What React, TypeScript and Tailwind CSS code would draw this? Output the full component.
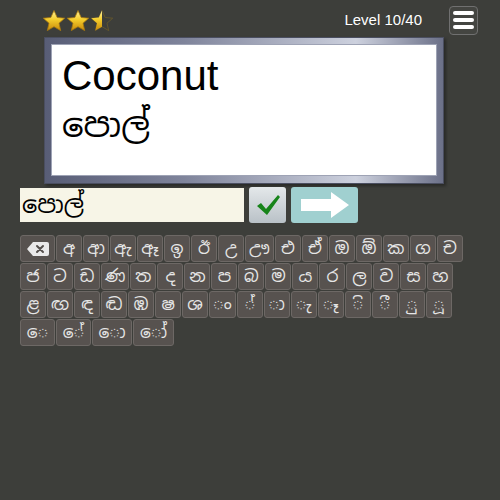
import { useState } from "react";

const row1 = ["අ", "ආ", "ඇ", "ඈ", "ඉ", "ඊ", "උ", "ඌ", "එ", "ඒ", "ඔ", "ඕ", "ක", "ග", "ච"];
const row2 = ["ජ", "ට", "ඩ", "ණ", "ත", "ද", "න", "ප", "බ", "ම", "ය", "ර", "ල", "ව", "ස", "හ"];
const row3 = [
  "ළ", "ඟ", "ඳ", "ඬ", "ඹ", "ෂ", "ශ",
  "\u25CCං", "\u25CC්", "\u25CCා", "\u25CCැ", "\u25CCෑ", "\u25CCි", "\u25CCී", "\u25CCු", "\u25CCූ",
];
const row4 = [
  { k: "\u25CCෙ", w: "min-w-[35px]" },
  { k: "\u25CCේ", w: "min-w-[35px]" },
  { k: "\u25CCො", w: "min-w-[40px]" },
  { k: "\u25CCෝ", w: "min-w-[41px]" },
];

const sinhala = "font-['Noto_Sans_Sinhala','Noto_Sans',sans-serif]";

const Star = ({ half }: { half?: boolean }) => (
  <svg width="24" height="24" viewBox="0 0 24 24">
    <defs>
      <linearGradient id="gold" x1="0" y1="0" x2="0" y2="1">
        <stop offset="0" stopColor="#fff3a0" />
        <stop offset="0.45" stopColor="#f5cd2c" />
        <stop offset="1" stopColor="#c98a0a" />
      </linearGradient>
      <clipPath id="leftHalf">
        <rect x="0" y="0" width="12" height="24" />
      </clipPath>
    </defs>
    <path
      d="M12 1.5l3.2 7 7.5.7-5.7 5 1.7 7.4L12 17.7l-6.7 3.9 1.7-7.4-5.7-5 7.5-.7z"
      fill={half ? "none" : "url(#gold)"}
      stroke={half ? "#6b5a2a" : "#a8770c"}
      strokeWidth="0.8"
      strokeLinejoin="round"
    />
    {half && (
      <path
        d="M12 1.5l3.2 7 7.5.7-5.7 5 1.7 7.4L12 17.7l-6.7 3.9 1.7-7.4-5.7-5 7.5-.7z"
        fill="url(#gold)"
        clipPath="url(#leftHalf)"
      />
    )}
  </svg>
);

const Key = ({ label, w }: { label: React.ReactNode; w?: string }) => (
  <button
    className={`h-[27px] ${w ?? "min-w-[26px]"} px-[3px] flex items-center justify-center rounded-[3px] border border-[#6d6865] bg-[#57524f] text-[#e6e6e6] text-[17px] leading-none ${sinhala}`}
  >
    {label}
  </button>
);

const BackspaceIcon = () => (
  <svg width="24" height="16" viewBox="0 0 24 16">
    <path d="M7 1h14a2 2 0 0 1 2 2v10a2 2 0 0 1-2 2H7L1 8z" fill="#e9e9e9" />
    <path d="M11 5l6 6M17 5l-6 6" stroke="#55504d" strokeWidth="2" strokeLinecap="round" />
  </svg>
);

export default function App() {
  const [answer] = useState("පොල්");

  return (
    <div className="w-[500px] h-[500px] bg-[#3d3e3a] overflow-hidden font-['Liberation_Sans',Arial,sans-serif]">
      {/* top bar */}
      <div className="flex items-center h-[40px] pl-[42px] pr-[22px]">
        <div className="flex gap-0 pt-[2px]">
          <Star />
          <Star />
          <Star half />
        </div>
        <div className="ml-auto text-white text-[15px] mr-[27px] pt-[1px]">Level 10/40</div>
        <button className="w-[29px] h-[29px] rounded-[4px] border border-[#707070] bg-[#444541] flex flex-col items-center justify-center gap-[3px]">
          <span className="block w-[21px] h-[4px] rounded-full bg-white" />
          <span className="block w-[21px] h-[4px] rounded-full bg-white" />
          <span className="block w-[21px] h-[4px] rounded-full bg-white" />
        </button>
      </div>

      {/* word card */}
      <div className="ml-[44px] mt-[-3px] w-[400px] h-[147px] p-[8px] pb-[9px] bg-[linear-gradient(to_right,#585d76,#7f849b_35%,#cdd1de_78%,#6a6f87)] shadow-[inset_0_0_0_1px_#4a4e60,2px_2px_3px_rgba(0,0,0,0.35)]">
        <div className="w-full h-full bg-white px-[10px] pt-[6px] shadow-[0_0_0_1px_#9ea3b5]">
          <div className="text-[42px] leading-[50px] text-black">Coconut</div>
          <div className={`text-[34px] leading-[48px] text-black ${sinhala}`}>පොල්</div>
        </div>
      </div>

      {/* answer row */}
      <div className="flex items-center mt-[3px] ml-[20px] gap-[5px]">
        <div className={`w-[224px] h-[34px] bg-[#f7f5e7] px-[2px] flex items-center text-[24px] text-black ${sinhala}`}>
          {answer}
        </div>
        <button className="w-[37px] h-[36px] rounded-[3px] bg-[linear-gradient(to_bottom,#e4e8ea,#b9c1c7)] flex items-center justify-center">
          <svg width="26" height="24" viewBox="0 0 26 24">
            <path d="M2 13l4-3 5 6L23 2l2 2-13 18z" fill="#17841a" />
          </svg>
        </button>
        <button className="w-[67px] h-[36px] rounded-[3px] bg-[#a0d0d0] flex items-center justify-center">
          <svg width="52" height="28" viewBox="0 0 52 28">
            <path d="M2 8h30V1l18 13-18 13v-7H2z" fill="#ffffff" />
          </svg>
        </button>
      </div>

      {/* keyboard */}
      <div className="ml-[20px] mt-[12px] flex flex-col gap-[1px]">
        <div className="flex gap-[1px]">
          <Key w="min-w-[35px]" label={<BackspaceIcon />} />
          {row1.map((k) => (
            <Key key={k} label={k} />
          ))}
        </div>
        <div className="flex gap-[1px]">
          {row2.map((k) => (
            <Key key={k} label={k} />
          ))}
        </div>
        <div className="flex gap-[1px]">
          {row3.map((k) => (
            <Key key={k} label={k} />
          ))}
        </div>
        <div className="flex gap-[1px]">
          {row4.map(({ k, w }) => (
            <Key key={k} w={w} label={k} />
          ))}
        </div>
      </div>
    </div>
  );
}
